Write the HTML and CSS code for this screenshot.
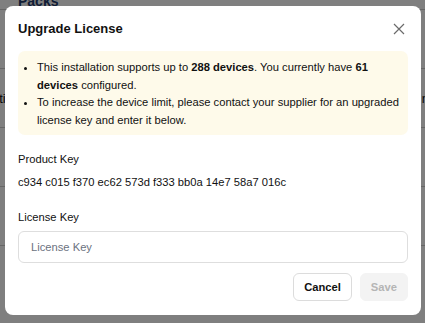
FILE: index.html
```html
<!DOCTYPE html>
<html lang="en">
<head>
    <meta charset="UTF-8">
    <title>Upgrade License</title>
    <link rel="stylesheet" href="styles.css">
</head>
<body>

    <div class="page">
        <div class="page-head">Packs</div>
        <div class="page-row"></div>
        <div class="page-row side">
            <span>Acti</span>
            <span>Inst</span>
        </div>
        <div class="page-row"></div>
        <div class="page-row"></div>
    </div>

    <div class="overlay"></div>

    <div class="modal">
        <div class="modal-header">
            <h2>Upgrade License</h2>
            <button class="close" aria-label="Close">
                <svg width="12" height="12" viewBox="0 0 12 12">
                    <path d="M1 1 L11 11 M11 1 L1 11" stroke="#6b6b6b" stroke-width="1.2" fill="none"/>
                </svg>
            </button>
        </div>

        <div class="notice">
            <ul>
                <li>This installation supports up to <b>288 devices</b>. You currently have <b>61 devices</b> configured.</li>
                <li>To increase the device limit, please contact your supplier for an upgraded license key and enter it below.</li>
            </ul>
        </div>

        <div class="field">
            <label>Product Key</label>
            <div class="value">c934 c015 f370 ec62 573d f333 bb0a 14e7 58a7 016c</div>
        </div>

        <div class="field license">
            <label class="input-label" for="license">License Key</label>
            <input id="license" type="text" placeholder="License Key">
        </div>

        <div class="actions">
            <button class="btn">Cancel</button>
            <button class="btn btn-save" disabled>Save</button>
        </div>
    </div>

</body>
</html>
```

FILE: styles.css
```css
body {
    font-family: "Liberation Sans", Arial, sans-serif;
    background: #fff;
    margin: 0;
    color: #111;
}
.page-head {
    height: 16px;
    padding-left: 18px;
    margin-top: -7px;
    font-weight: bold;
    font-size: 14px;
    color: #1f3a6b;
    border-bottom: 1px solid #ccc;
}
.page-row {
    height: 58px;
    border-bottom: 1px solid #ccc;
}
.page-row.side {
    display: flex;
    justify-content: space-between;
    align-items: center;
    font-size: 13px;
}
.page-row.side span:first-child {
    margin-left: -16px;
}
.page-row.side span:last-child {
    margin-right: -14px;
}
.overlay {
    position: fixed;
    inset: 0;
    background: rgba(0, 0, 0, 0.5);
}
.modal {
    position: absolute;
    left: 5px;
    top: 6px;
    width: 390px;
    height: 297px;
    padding: 0 13px 12px 13px;
    background: #fff;
    border-radius: 8px;
}
.modal-header {
    display: flex;
    justify-content: space-between;
    align-items: center;
    height: 45px;
}
.modal-header h2 {
    margin: 0;
    font-size: 13px;
    font-weight: bold;
}
.close {
    background: none;
    border: none;
    padding: 0;
    margin-right: 3px;
    display: flex;
    cursor: pointer;
}
.notice {
    background: #fefaea;
    border-radius: 7px;
    padding: 8px 4px 6px 10px;
    font-size: 11.2px;
    line-height: 17.5px;
}
.notice ul {
    margin: 0;
    padding-left: 9px;
}
.field {
    margin-top: 18px;
    font-size: 11.2px;
}
.field.license {
    margin-top: 23px;
}
.field label {
    display: block;
    margin-bottom: 11px;
}
.field .input-label {
    margin-bottom: 8px;
}
.field input {
    box-sizing: border-box;
    width: 100%;
    height: 32px;
    border: 1px solid #dedede;
    border-radius: 6px;
    padding: 0 12px;
    font-family: inherit;
    font-size: 11.2px;
}
.field input::placeholder {
    color: #6b7280;
}
.actions {
    display: flex;
    justify-content: flex-end;
    gap: 8px;
    margin-top: 10px;
}
.btn {
    height: 28px;
    padding: 0 10px;
    background: #fff;
    border: 1px solid #dcdcdc;
    border-radius: 6px;
    font-family: inherit;
    font-size: 11.2px;
    font-weight: bold;
    color: #111;
    cursor: pointer;
}
.btn-save {
    background: #f3f3f3;
    border-color: #f3f3f3;
    color: #b5b5b5;
    cursor: default;
}
```
